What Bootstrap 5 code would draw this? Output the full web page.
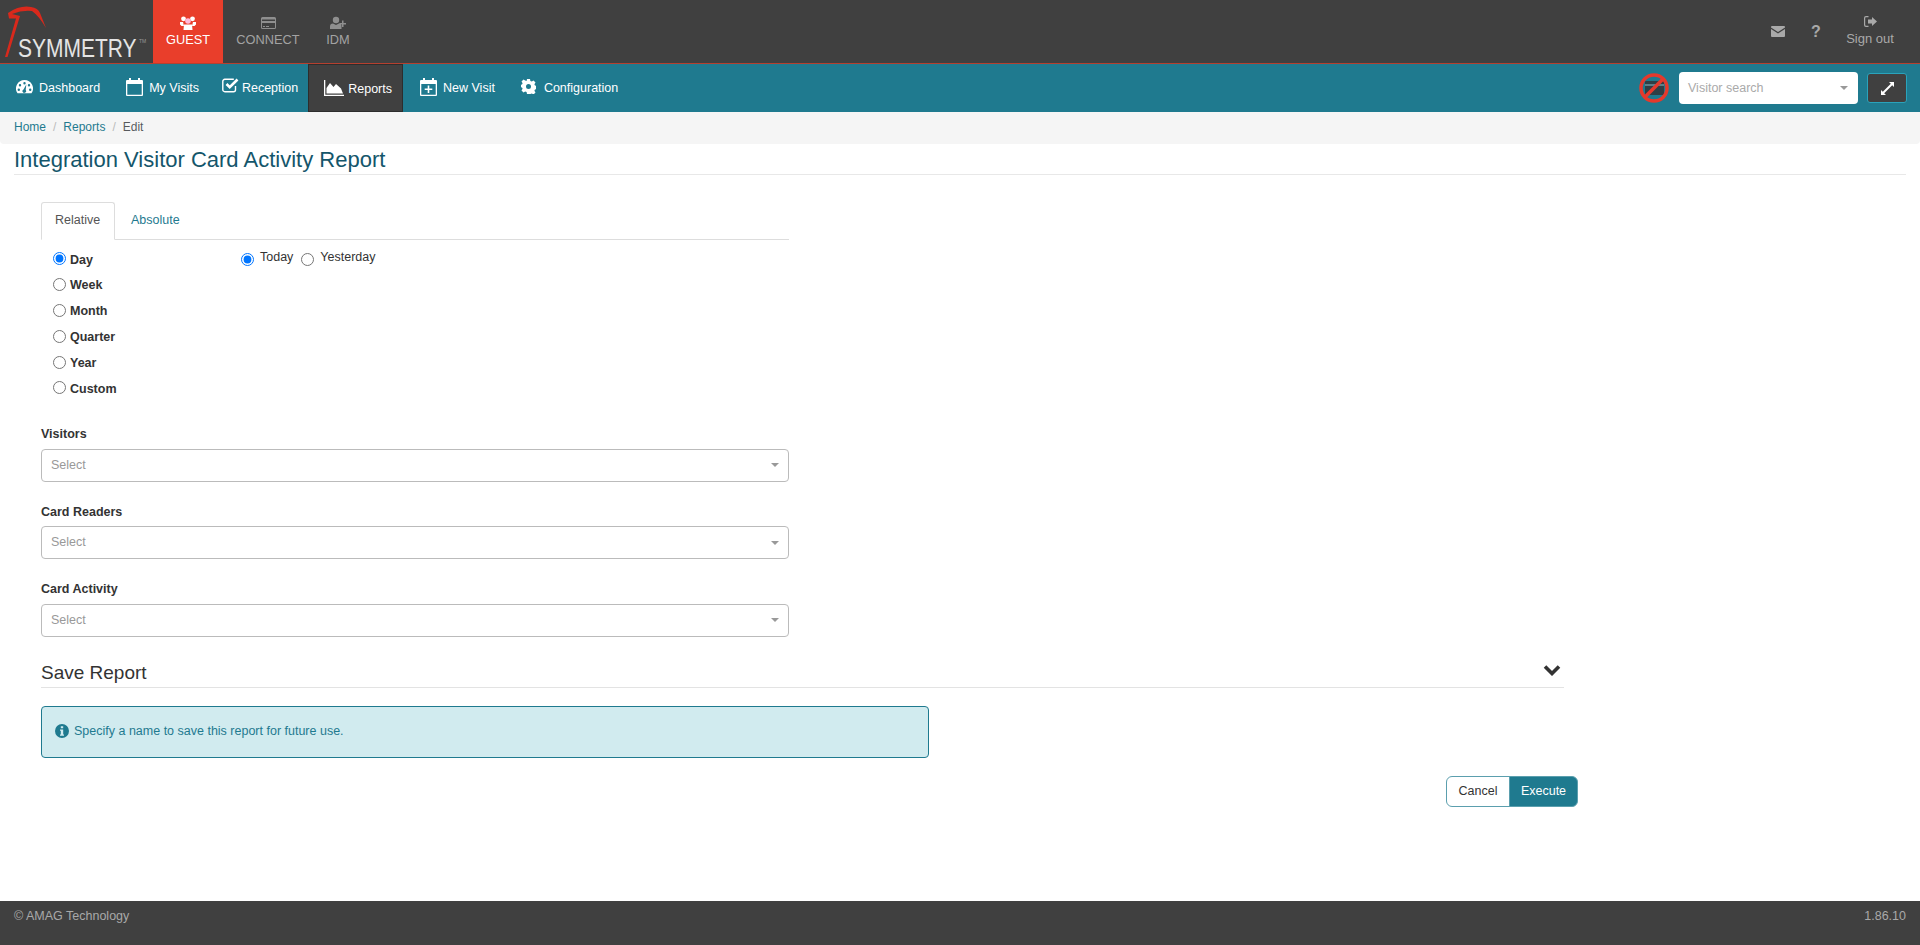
<!DOCTYPE html>
<html lang="en">
<head>
    <meta charset="UTF-8">
    <meta name="viewport" content="width=device-width, initial-scale=1.0">
    <title>Symmetry - Integration Visitor Card Activity Report</title>
    <link href="https://cdn.jsdelivr.net/npm/bootstrap@5.3.2/dist/css/bootstrap.min.css" rel="stylesheet">
    <style>
        html, body { height: 100%; }
        body {
            font-family: "Liberation Sans", Arial, sans-serif;
            font-size: 12.5px;
            color: #333;
            background: #fff;
        }
        .page-wrap { min-height: 945px; height: 100vh; }
        a { text-decoration: none; }

        .top-bar { height: 64px; background: #404040; border-bottom: 1px solid #b5402f; }
        .logo-box { width: 153px; height: 63px; }
        .app-tab {
            height: 63px;
            width: 70px;
            color: #a3a3a3;
            font-size: 12.8px;
            padding-top: 16px;
            line-height: 16px;
        }
        .app-tab svg { display: block; margin-bottom: 2px; }
        .app-tab.on { background: #e93e2b; color: #fff; }
        .app-tab.wide { width: 90px; }
        .app-tab.thin { width: 50px; }
        .top-icon { color: #a9a9a9; width: 38px; }
        .sign-out { color: #a9a9a9; font-size: 13px; width: 70px; line-height: 16px; margin: 0 15px 0 0; }
        .help-mark { font-weight: 700; font-size: 16px; line-height: 16px; }

        .nav-bar { height: 48px; background: #1f7a8f; }
        .nav-entry { color: #fff; height: 48px; font-size: 12.5px; }
        .nav-entry:hover { color: #fff; }
        .nav-entry svg { margin-right: 6px; margin-top: -3px; }
        .nav-dash { margin-left: 16px; }
        .nav-mine { margin-left: 26px; }
        .nav-desk { margin-left: 23px; }
        .nav-desk svg { margin-right: 3px; margin-top: -5px; }
        .nav-on {
            background: #404040;
            border: 1px solid #2d2d2d;
            padding: 2px 10px 0 15px;
            margin-left: 10px;
        }
        .nav-on svg { margin-right: 4px; margin-top: -3px; }
        .nav-new { margin-left: 17px; }
        .nav-cfg { margin-left: 26px; }
        .nav-cfg svg { margin-right: 8px; }
        .ban-icon { margin-right: 10px; }
        .search-box {
            width: 179px;
            height: 32px;
            background: #fff;
            border-radius: 4px;
            color: #aaa;
            padding: 0 10px 0 9px;
            font-size: 12.5px;
        }
        .down-caret { width: 0; height: 0; border-left: 4px solid transparent; border-right: 4px solid transparent; border-top: 4px solid #999; }
        .expand-btn {
            width: 40px;
            height: 30px;
            background: #404040;
            border: 1px solid #2aa3bb;
            border-radius: 3px;
            margin: 0 13px 0 9px;
            padding: 0;
        }

        .crumbs { height: 32px; background: #f5f5f5; padding: 0 14px 2px; font-size: 12px; border-radius: 0 0 4px 4px; }
        .crumbs .breadcrumb-item a { color: #1f7a8f; }
        .crumbs .breadcrumb-item + .breadcrumb-item { padding-left: 7px; }
        .crumbs .breadcrumb-item + .breadcrumb-item::before { padding-right: 7px; color: #bbb; }
        .crumb-now { color: #333; }

        .page-title {
            margin: 3px 14px 0;
            height: 28px;
            font-size: 22px;
            line-height: 26px;
            color: #14566b;
            border-bottom: 1px solid #e8e8e8;
        }
        .form-area { padding: 27px 342px 0 41px; }
        .form-narrow { width: 748px; }

        .tab-strip { border-bottom: 1px solid #ddd; height: 38px; font-size: 12.5px; }
        .tab-strip .nav-link { height: 38px; padding: 0 14px; line-height: 35px; color: #1f7a8f; }
        .tab-strip .nav-link.active { color: #555; width: 74px; padding: 0 13px; border-color: #ddd #ddd #fff; border-radius: 3px 3px 0 0; }
        .tab-strip .nav-item + .nav-item { margin-left: 1px; }

        .period-row { padding: 7px 0 0 5px; height: 170px; }
        .period-list { width: 190px; }
        .period-item { height: 25.8px; font-weight: 700; font-size: 12.5px; margin: 0; }
        .period-item input { margin: -2px 4px 0 7px; width: 13px; height: 13px; }
        .period-sub { font-size: 12.5px; height: 26px; margin-right: 3px; }
        .period-sub input { margin: -2px 6px 0 5px; width: 13px; height: 13px; }
        .period-sub span { margin-top: -5px; }

        .field-block { margin-bottom: 22px; }
        .field-block:last-child { margin-bottom: 0; }
        .field-label { font-weight: 700; font-size: 12.5px; line-height: 16px; margin: 0 0 6.5px; display: block; }
        .select-box {
            height: 33px;
            border: 1px solid #bbb;
            border-radius: 4px;
            padding: 0 9px;
            color: #999;
            font-size: 12.5px;
            background: #fff;
        }

        .save-head {
            margin: 13px 14px 0 0;
            height: 38px;
            padding-bottom: 3px;
            border-bottom: 1px solid #e3e3e3;
            font-size: 19px;
            line-height: 22px;
            color: #333;
        }
        .fold-mark { margin: 0 3px 8px 0; }
        .save-note {
            width: 888px;
            height: 52px;
            margin: 18px 0 0;
            padding: 0 13px;
            background: #d1ebef;
            border: 1px solid #1f7a8f;
            border-radius: 4px;
            color: #1f7a8f;
            font-size: 12.5px;
        }
        .save-note svg { margin-right: 5px; margin-top: -2px; }
        .action-row { margin-top: 18px; }
        .btn-cancel, .btn-run {
            height: 31px;
            font-size: 12.5px;
            padding: 0;
            border-color: #5b9fae;
            line-height: 26px;
        }
        .btn-cancel { width: 64px; background: #fff; color: #333; }
        .btn-run { width: 69px; background: #1f7a8f; color: #fff; }

        .foot-bar { height: 44px; background: #404040; color: #a9a9a9; padding: 0 14px 14px; font-size: 12.5px; }
    </style>
</head>
<body>
<div class="page-wrap d-flex flex-column">

    <!-- application bar -->
    <div class="top-bar d-flex flex-shrink-0">
        <div class="logo-box flex-shrink-0">
            <svg width="153" height="63" viewBox="0 0 153 63">
                <path d="M8 13Q20 5 31 7Q38 8 40 13L46 28Q39 16 32 11Q22 10 12 14L20 16L7.500 57H5L16 18.500H9z" fill="#d9291c"/>
                <text transform="translate(18 57) scale(1 1.2)" font-family="Liberation Sans" font-size="21" fill="#e4e4e4">SYMMETRY</text>
                <text x="139" y="43" font-family="Liberation Sans" font-size="5" fill="#999">TM</text>
            </svg>
        </div>
        <a href="#" class="app-tab on d-flex flex-column align-items-center">
            <svg width="16" height="14" viewBox="0 0 16 14" fill="#fff"><circle cx="3.500" cy="2.800" r="2.400"/><circle cx="12.500" cy="2.800" r="2.400"/><path d="M0 6h3l1 4H1.500L0 8.500zM16 6h-3l-1 4h2.500L16 8.500z"/><circle cx="8" cy="5" r="2.800" fill="#fbd"/><path d="M4 8.500h8l.5 5.500h-9z"/></svg>
            GUEST
        </a>
        <a href="#" class="app-tab wide d-flex flex-column align-items-center">
            <svg width="15" height="14" viewBox="0 0 15 14" fill="#8f8f8f"><path fill-rule="evenodd" d="M1.500 1h12A1.500 1.500 0 0 1 15 2.500v9a1.500 1.500 0 0 1-1.500 1.500h-12A1.500 1.500 0 0 1 0 11.500v-9A1.500 1.500 0 0 1 1.500 1zM1 3.500v1.500h13V3.500zM1 7v4.500a.5.500 0 0 0 .5.500h12a.5.500 0 0 0 .5-.5V7zM2 10h2v1H2zM5 10h3v1H5z"/></svg>
            CONNECT
        </a>
        <a href="#" class="app-tab thin d-flex flex-column align-items-center">
            <svg width="16" height="14" viewBox="0 0 16 14" fill="#8f8f8f"><circle cx="6" cy="4" r="3.200"/><path d="M0 13V10.500Q0 7.500 3 7.500L6 9l3-1.500Q11 7.500 11.500 9.500V13zM12 4.500h1.500V7H16v1.500h-2.500V11H12V8.500H9.500V7H12z"/></svg>
            IDM
        </a>
        <div class="ms-auto d-flex align-items-center">
            <span class="top-icon d-flex justify-content-center">
                <svg width="14" height="11" viewBox="0 0 14 11" fill="#a9a9a9"><path d="M1 0h12a1 1 0 0 1 1 1v.5L7 6 0 1.500V1a1 1 0 0 1 1-1zM0 3l7 4.500L14 3v7a1 1 0 0 1-1 1H1a1 1 0 0 1-1-1z"/></svg>
            </span>
            <span class="top-icon help-mark text-center">?</span>
            <a href="#" class="sign-out d-flex flex-column align-items-center">
                <svg class="mb-1" width="13" height="11" viewBox="0 0 13 11" fill="#a9a9a9"><path d="M4.500 0v1.200H2A.8.800 0 0 0 1.200 2v7a.8.800 0 0 0 .8.800h2.500V11H2a2 2 0 0 1-2-2V2a2 2 0 0 1 2-2zM8 1l5 4.500L8 10V7.500H4v-4h4z"/></svg>
                Sign out
            </a>
        </div>
    </div>

    <!-- main navigation -->
    <nav class="nav-bar d-flex align-items-center flex-shrink-0">
        <a href="#" class="nav-entry nav-dash d-flex align-items-center">
            <svg width="17" height="14" viewBox="0 0 17 14" fill="#fff"><path fill-rule="evenodd" d="M8.500 0a8.500 8.500 0 0 1 7 13.300H1.500A8.500 8.500 0 0 1 8.500 0zM8.500 2a1.200 1.200 0 1 0 0 2.400 1.200 1.200 0 0 0 0-2.400zM4 4a1.200 1.200 0 1 0 0 2.400A1.200 1.200 0 0 0 4 4zM13 4a1.200 1.200 0 1 0 0 2.400A1.200 1.200 0 0 0 13 4zM2.800 8.500a1.200 1.200 0 1 0 0 2.400 1.200 1.200 0 0 0 0-2.400zM14.200 8.500a1.200 1.200 0 1 0 0 2.400 1.200 1.200 0 0 0 0-2.400zM10.300 4.500L7.500 9.500a1.800 1.800 0 1 0 2.200.5z"/></svg>
            Dashboard
        </a>
        <a href="#" class="nav-entry nav-mine d-flex align-items-center">
            <svg width="17" height="18" viewBox="0 0 17 18" fill="#fff"><path fill-rule="evenodd" d="M3 0h2v2h7V0h2v2h2a1 1 0 0 1 1 1v14a1 1 0 0 1-1 1H1a1 1 0 0 1-1-1V3a1 1 0 0 1 1-1h2zM1.300 6v10.700h14.400V6z"/></svg>
            My Visits
        </a>
        <a href="#" class="nav-entry nav-desk d-flex align-items-center">
            <svg width="17" height="15" viewBox="0 0 17 15"><path d="M13.500 8v3.700A2 2 0 0 1 11.500 13.700H2.800A2 2 0 0 1 .8 11.700V3.300A2 2 0 0 1 2.800 1.300h9" fill="none" stroke="#fff" stroke-width="1.400"/><path d="M4.500 6l3.200 3.200L15.500 1.500" fill="none" stroke="#fff" stroke-width="2.600"/></svg>
            Reception
        </a>
        <a href="#" class="nav-entry nav-on d-flex align-items-center">
            <svg width="20" height="16" viewBox="0 0 20 16" fill="#fff"><path d="M0 0h1.300v14.700H20V16H0zM2.500 13.500V8L6 3l3.500 4L12 4l5 4.500 2 5z"/></svg>
            Reports
        </a>
        <a href="#" class="nav-entry nav-new d-flex align-items-center">
            <svg width="17" height="18" viewBox="0 0 17 18" fill="#fff"><path fill-rule="evenodd" d="M3 0h2v2h7V0h2v2h2a1 1 0 0 1 1 1v14a1 1 0 0 1-1 1H1a1 1 0 0 1-1-1V3a1 1 0 0 1 1-1h2zM1.300 6v10.700h14.400V6zM7.700 7.500h1.600v3h3v1.600h-3v3H7.700v-3h-3v-1.600h3z"/></svg>
            New Visit
        </a>
        <a href="#" class="nav-entry nav-cfg d-flex align-items-center">
            <svg width="15" height="15" viewBox="0 0 15 15" fill="#fff"><path fill-rule="evenodd" d="M6 0h3l.4 2 1.400.6 1.700-1.100 2 2-1.100 1.700.6 1.400 2 .4v3l-2 .4-.6 1.400 1.100 1.700-2 2-1.700-1.100-1.400.6L9 15H6l-.4-2-1.400-.6-1.700 1.100-2-2 1.100-1.700-.6-1.400-2-.4V6l2-.4.6-1.400L.5 2.500l2-2 1.700 1.100L5.600 2zM7.500 5a2.500 2.500 0 1 0 0 5 2.500 2.500 0 0 0 0-5z"/></svg>
            Configuration
        </a>
        <div class="ms-auto d-flex align-items-center">
            <svg class="ban-icon" width="30" height="30" viewBox="0 0 30 30">
                <rect x="6" y="8" width="19" height="14" rx="1" fill="#2f3f46"/>
                <rect x="6" y="11" width="19" height="2" fill="#5e7f88"/>
                <circle cx="15" cy="15" r="13" fill="none" stroke="#e5392c" stroke-width="3.500"/>
                <path d="M24 6L6 24" stroke="#e5392c" stroke-width="3.500"/>
            </svg>
            <div class="search-box d-flex align-items-center justify-content-between">
                <span>Visitor search</span>
                <span class="down-caret"></span>
            </div>
            <button type="button" class="expand-btn d-flex align-items-center justify-content-center">
                <svg width="13" height="13" viewBox="0 0 13 13" fill="#fff"><path d="M8 0H13V5L11.200 3.200 3.200 11.200 5 13H0V8L1.800 9.800 9.800 1.800z"/></svg>
            </button>
        </div>
    </nav>

    <!-- breadcrumb -->
    <ol class="breadcrumb crumbs align-items-center mb-0 flex-shrink-0">
        <li class="breadcrumb-item"><a href="#">Home</a></li>
        <li class="breadcrumb-item"><a href="#">Reports</a></li>
        <li class="breadcrumb-item active crumb-now">Edit</li>
    </ol>

    <h1 class="page-title fw-normal flex-shrink-0">Integration Visitor Card Activity Report</h1>

    <div class="form-area flex-grow-1">
        <div class="form-narrow">
            <ul class="nav nav-tabs tab-strip">
                <li class="nav-item"><a class="nav-link active" href="#">Relative</a></li>
                <li class="nav-item"><a class="nav-link" href="#">Absolute</a></li>
            </ul>

            <div class="period-row d-flex">
                <div class="period-list d-flex flex-column" id="periodList"></div>
                <div class="d-flex">
                    <label class="period-sub d-flex align-items-center"><input type="radio" name="subPeriod" checked><span>Today</span></label>
                    <label class="period-sub d-flex align-items-center"><input type="radio" name="subPeriod"><span>Yesterday</span></label>
                </div>
            </div>

            <div id="fieldList" class="mt-3"></div>
        </div>

        <div class="save-head d-flex justify-content-between align-items-end">
            <span>Save Report</span>
            <svg class="fold-mark" width="18" height="12" viewBox="0 0 18 12"><path d="M2 2.500L9 9.500 16 2.500" fill="none" stroke="#333" stroke-width="3.600"/></svg>
        </div>

        <div class="alert save-note d-flex align-items-center" role="alert">
            <svg width="14" height="14" viewBox="0 0 14 14" fill="#1f7a8f"><path fill-rule="evenodd" d="M7 0a7 7 0 1 1 0 14A7 7 0 0 1 7 0zM5.800 2.300v2h2.400v-2zM5 5.500v1.300h.8v3.600H5v1.300h4v-1.300h-.8V5.500z"/></svg>
            Specify a name to save this report for future use.
        </div>

        <div class="action-row d-flex justify-content-end">
            <div class="btn-group">
                <button type="button" class="btn btn-cancel">Cancel</button>
                <button type="button" class="btn btn-run">Execute</button>
            </div>
        </div>
    </div>

    <footer class="foot-bar d-flex justify-content-between align-items-center flex-shrink-0">
        <span>© AMAG Technology</span>
        <span>1.86.10</span>
    </footer>
</div>

<script src="https://cdn.jsdelivr.net/npm/bootstrap@5.3.2/dist/js/bootstrap.bundle.min.js"></script>
<script>
    const periods = ['Day', 'Week', 'Month', 'Quarter', 'Year', 'Custom'];
    const periodList = document.getElementById('periodList');
    periods.forEach((name, i) => {
        const row = document.createElement('label');
        row.className = 'period-item d-flex align-items-center';
        row.innerHTML = `<input type="radio" name="period" ${i === 0 ? 'checked' : ''}><span>${name}</span>`;
        periodList.appendChild(row);
    });

    const fields = ['Visitors', 'Card Readers', 'Card Activity'];
    const fieldList = document.getElementById('fieldList');
    fields.forEach(name => {
        const block = document.createElement('div');
        block.className = 'field-block';
        block.innerHTML = `
            <span class="field-label">${name}</span>
            <div class="select-box d-flex align-items-center justify-content-between">
                <span>Select</span><span class="down-caret"></span>
            </div>`;
        fieldList.appendChild(block);
    });
</script>
</body>
</html>
